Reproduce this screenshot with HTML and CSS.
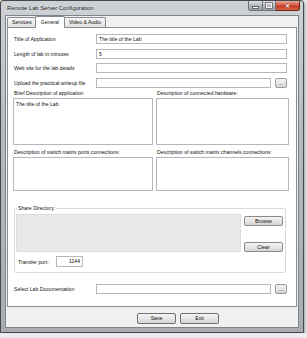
FILE: index.html
```html
<!DOCTYPE html>
<html lang="en">
  <head>
    <meta charset="UTF-8" />
    <meta name="viewport" content="width=device-width, initial-scale=1.0" />
    <title>Remote Lab Server Configuration</title>
    <link rel="stylesheet" href="styles.css">
  </head>
  <body>
    <div class="window">
      <!-- title bar -->
      <div class="titlebar">
        <span class="title">Remote Lab Server Configuration</span>
        <div class="caption-buttons">
          <span class="cap cap-min"><i></i></span>
          <span class="cap cap-max"><i></i></span>
          <span class="cap cap-close">&#x2715;</span>
        </div>
      </div>

      <div class="client">
        <div class="tabs">
          <span class="tab">Services</span>
          <span class="tab active">General</span>
          <span class="tab">Video &amp; Audio</span>
        </div>

        <div class="page">
          <div class="fields">
            <label>Title of Application</label>
            <div class="textbox">The title of the Lab</div>

            <label>Length of lab in minutes</label>
            <div class="textbox">5</div>

            <label>Web site for the lab details</label>
            <div class="textbox"></div>

            <label>Upload the practical writeup file</label>
            <div class="file-row">
              <div class="textbox"></div>
              <button class="btn btn-dots">...</button>
            </div>
          </div>

          <div class="descriptions">
            <label class="desc-label">Brief Description of application</label>
            <label class="desc-label">Description of connected hardware:</label>
            <div class="textarea tall">The title of the Lab</div>
            <div class="textarea tall"></div>
            <label class="desc-label second">Description of switch matrix ports connections:</label>
            <label class="desc-label second">Description of switch matrix channels connections:</label>
            <div class="textarea short"></div>
            <div class="textarea short"></div>
          </div>

          <fieldset class="share">
            <legend>Share Directory:</legend>
            <div class="share-main">
              <div class="share-area"></div>
              <div class="share-buttons">
                <button class="btn">Browse</button>
                <button class="btn">Clear</button>
              </div>
            </div>
            <div class="port-row">
              <label>Transfer port:</label>
              <div class="textbox port">1144</div>
            </div>
          </fieldset>

          <div class="doc-row">
            <label>Select Lab Documentation</label>
            <div class="file-row">
              <div class="textbox"></div>
              <button class="btn btn-dots">...</button>
            </div>
          </div>
        </div>

        <div class="actions">
          <button class="btn btn-action">Save</button>
          <button class="btn btn-action">Exit</button>
        </div>
      </div>
    </div>
  </body>
</html>
```

FILE: styles.css
```css
body {
  margin: 0;
  padding: 0;
  background-color: #ececec;
  font-family: "Liberation Sans", Arial, sans-serif;
  font-size: 5.15px;
  color: #111;
}

.window {
  box-sizing: border-box;
  width: 304px;
  height: 333px;
  border: 1px solid #45494d;
  border-radius: 3px 3px 0 0;
  background: linear-gradient(#cfd2d5, #b6babe 40%, #a9adb1);
  padding: 0 4px 4px 4px;
  display: flex;
  flex-direction: column;
  box-shadow: 1px 2px 3px rgba(0, 0, 0, 0.35);
}

/* title bar */
.titlebar {
  height: 14px;
  display: flex;
  justify-content: space-between;
  align-items: flex-start;
}

.title {
  font-size: 5.8px;
  line-height: 14px;
  padding-left: 2px;
  color: #111;
  text-shadow: 0 0 2px #fff;
}

.caption-buttons {
  display: flex;
  margin-right: -1px;
}

.cap {
  box-sizing: border-box;
  height: 10px;
  border: 1px solid #6c7177;
  border-top: none;
  background: linear-gradient(#dfe2e5, #b3b7bb 50%, #9ea3a8);
  display: flex;
  align-items: center;
  justify-content: center;
}

.cap-min {
  width: 15px;
  border-radius: 0 0 0 3px;
}

.cap-min i {
  width: 5px;
  height: 1px;
  margin-top: 3px;
  background: #fff;
  border: 1px solid #666;
}

.cap-max {
  width: 13px;
  border-left: none;
}

.cap-max i {
  width: 4px;
  height: 3px;
  border: 1px solid #f4f4f4;
  outline: 1px solid #777;
}

.cap-close {
  width: 24px;
  border-color: #6b2418;
  border-left: none;
  border-radius: 0 0 3px 0;
  background: linear-gradient(#e9a99c, #cf5a43 45%, #c43b20 60%, #d9664a);
  color: #fff;
  font-size: 6px;
  font-weight: bold;
  text-shadow: 0 0 1px #500;
}

/* client area */
.client {
  flex: 1;
  background-color: #f0f0f0;
  border: 1px solid #7f848a;
  display: flex;
  flex-direction: column;
}

.tabs {
  display: flex;
  align-items: flex-end;
  height: 11px;
  padding-left: 1px;
}

.tab {
  box-sizing: border-box;
  height: 10px;
  line-height: 9px;
  padding: 0 4px;
  border: 1px solid #898c95;
  border-bottom: none;
  border-radius: 2px 2px 0 0;
  background: linear-gradient(#f6f6f6, #e1e1e1);
  margin-right: -1px;
}

.tab.active {
  height: 12px;
  line-height: 11px;
  background: #fff;
  margin: 0 -1px 0 -1px;
  position: relative;
  z-index: 1;
  padding: 0 5px;
  margin-bottom: -1px;
}

.page {
  box-sizing: border-box;
  height: 280px;
  margin: 0 1px;
  background: #fff;
  border: 1px solid #898c95;
  padding: 6px 9px 0 5px;
}

.textbox,
.textarea {
  box-sizing: border-box;
  border: 1px solid #b4b7bd;
  background: #fff;
  padding: 0 2px;
}

.textbox {
  height: 10px;
  line-height: 8px;
}

/* top fields */
.fields {
  display: grid;
  grid-template-columns: 83px 1fr;
  grid-auto-rows: 10px;
  row-gap: 4.5px;
  align-items: center;
}

.fields label,
.doc-row label {
  padding-left: 1px;
}

.file-row {
  display: flex;
  gap: 4px;
}

.file-row .textbox {
  flex: 1;
}

.btn {
  box-sizing: border-box;
  font-family: inherit;
  font-size: 5.15px;
  color: #111;
  border: 1px solid #707070;
  border-radius: 2px;
  background: linear-gradient(#f4f4f4, #e6e6e6 50%, #d5d5d5);
  padding: 0;
  margin: 0;
  height: 10px;
  line-height: 8px;
}

.btn-dots {
  width: 12px;
  border-color: #9a9a9a;
}

/* descriptions */
.descriptions {
  display: grid;
  grid-template-columns: 140px 133px;
  column-gap: 3px;
  row-gap: 1px;
  margin-top: 1.5px;
}

.desc-label {
  line-height: 8px;
  padding-left: 1px;
}

.desc-label.second {
  padding-top: 2px;
}

.textarea {
  padding: 2px 2px;
  line-height: 6px;
}

.textarea.tall {
  height: 47px;
}

.textarea.short {
  height: 34px;
}

/* share directory group */
.share {
  margin: 13px 1px 0 1px;
  padding: 2px 2px 5px 1px;
  border: 1px solid #d5dbe0;
  border-radius: 2px;
  min-width: 0;
}

.share legend {
  padding: 0 1px;
  margin-left: 1px;
  line-height: 8px;
}

.share-main {
  display: flex;
  gap: 3px;
  height: 38px;
}

.share-area {
  flex: 1;
  background: #e9e9e9;
  border: 1px solid #dcdcdc;
}

.share-buttons {
  width: 39px;
  display: flex;
  flex-direction: column;
  justify-content: space-between;
  padding: 2px 0 0 0;
}

.share-buttons .btn {
  border-color: #8a8a8a;
}

.port-row {
  display: flex;
  align-items: center;
  margin-top: 4px;
  padding-left: 2px;
}

.port-row label {
  width: 38px;
}

.textbox.port {
  width: 27px;
  height: 11px;
  line-height: 9px;
  text-align: right;
}

/* documentation row */
.doc-row {
  display: grid;
  grid-template-columns: 83px 1fr;
  align-items: center;
  margin-top: 11px;
}

/* bottom strip */
.actions {
  flex: 1;
  display: flex;
  gap: 4px;
  padding: 6px 0 0 131px;
}

.btn-action {
  width: 39px;
  height: 11px;
  line-height: 9px;
}
```
